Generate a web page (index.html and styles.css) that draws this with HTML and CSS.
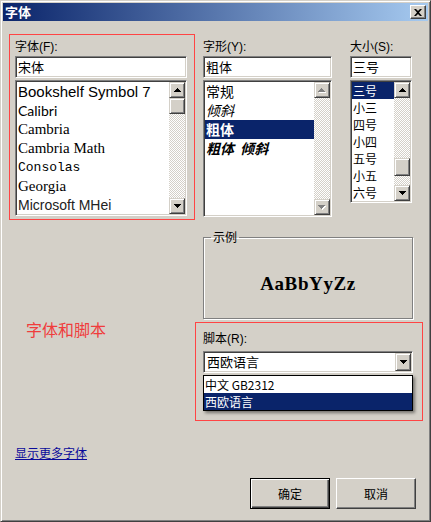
FILE: index.html
```html
<!DOCTYPE html>
<html lang="zh">
<head>
<meta charset="utf-8">
<title>字体</title>
<link rel="stylesheet" href="styles.css">
</head>
<body>
<div class="window">
  <div class="titlebar">
    <span class="title">字体</span>
    <div class="close"><svg width="8" height="7" viewBox="0 0 8 7"><path d="M0 0h2l2 2 2-2h2L5 3.5 8 7H6L4 5 2 7H0l3-3.5z" fill="#000"/></svg></div>
  </div>
  <div class="body">
    <div class="toprow">
      <div class="fontbox">
        <div class="lbl">字体(F):</div>
        <div class="field">宋体</div>
        <div class="list fontlist">
          <div class="items">
            <div class="row f-book">Bookshelf Symbol 7</div>
            <div class="row f-calibri">Calibri</div>
            <div class="row f-cambria">Cambria</div>
            <div class="row f-cambria">Cambria Math</div>
            <div class="row f-consolas">Consolas</div>
            <div class="row f-georgia">Georgia</div>
            <div class="row f-mhei">Microsoft MHei</div>
          </div>
          <div class="vscroll">
            <div class="sbtn"><svg width="7" height="4" viewBox="0 0 7 4"><path d="M3 0h1v1h1v1h1v1h1v1H0V3h1V2h1V1h1z" fill="#000"/></svg></div>
            <div class="track"><div class="thumb"></div></div>
            <div class="sbtn"><svg width="7" height="4" viewBox="0 0 7 4"><path d="M0 0h7v1H6v1H5v1H4v1H3V3H2V2H1V1H0z" fill="#000"/></svg></div>
          </div>
        </div>
      </div>
      <div class="col stylecol">
        <div class="lbl">字形(Y):</div>
        <div class="field">粗体</div>
        <div class="list stylelist">
          <div class="items">
            <div class="row s-row">常规</div>
            <div class="row s-row it">倾斜</div>
            <div class="row s-row bd sel">粗体</div>
            <div class="row s-row bd it">粗体&nbsp;&nbsp;倾斜</div>
          </div>
          <div class="vscroll">
            <div class="sbtn"><svg width="8" height="5" viewBox="0 0 8 5"><path d="M4 1h1v1h1v1h1v1h1v1H1V4h1V3h1V2h1z" fill="#fff"/><path d="M3 0h1v1h1v1h1v1h1v1H0V3h1V2h1V1h1z" fill="#808080"/></svg></div>
            <div class="track"></div>
            <div class="sbtn"><svg width="8" height="5" viewBox="0 0 8 5"><path d="M1 1h7v1H7v1H6v1H5v1H4V4H3V3H2V2H1z" fill="#fff"/><path d="M0 0h7v1H6v1H5v1H4v1H3V3H2V2H1V1H0z" fill="#808080"/></svg></div>
          </div>
        </div>
      </div>
      <div class="col sizecol">
        <div class="lbl">大小(S):</div>
        <div class="field">三号</div>
        <div class="list sizelist">
          <div class="items">
            <div class="row z-row sel">三号</div>
            <div class="row z-row">小三</div>
            <div class="row z-row">四号</div>
            <div class="row z-row">小四</div>
            <div class="row z-row">五号</div>
            <div class="row z-row">小五</div>
            <div class="row z-row">六号</div>
          </div>
          <div class="vscroll">
            <div class="sbtn"><svg width="7" height="4" viewBox="0 0 7 4"><path d="M3 0h1v1h1v1h1v1h1v1H0V3h1V2h1V1h1z" fill="#000"/></svg></div>
            <div class="track sizetrack"><div class="thumb"></div></div>
            <div class="sbtn"><svg width="7" height="4" viewBox="0 0 7 4"><path d="M0 0h7v1H6v1H5v1H4v1H3V3H2V2H1V1H0z" fill="#000"/></svg></div>
          </div>
        </div>
      </div>
    </div>

    <div class="midrow">
      <div class="leftcol">
        <div class="redtext">字体和脚本</div>
      </div>
      <div class="rightcol">
        <fieldset class="sample">
          <legend>示例</legend>
          <div class="sampletext">AaBbYyZz</div>
        </fieldset>
        <div class="scriptbox">
          <div class="lbl">脚本(R):</div>
          <div class="combo">
            <span class="combotext">西欧语言</span>
            <div class="sbtn combobtn"><svg width="7" height="4" viewBox="0 0 7 4"><path d="M0 0h7v1H6v1H5v1H4v1H3V3H2V2H1V1H0z" fill="#000"/></svg></div>
            <div class="dropdown">
              <div class="drow">中文 GB2312</div>
              <div class="drow sel">西欧语言</div>
            </div>
          </div>
        </div>
      </div>
    </div>

    <a class="morelink" href="#">显示更多字体</a>

    <div class="buttons">
      <div class="btn default">确定</div>
      <div class="btn">取消</div>
    </div>
  </div>
</div>
</body>
</html>
```
FILE: styles.css
```css
* { box-sizing: border-box; }
html, body { margin: 0; padding: 0; }
body {
  background: #d4d0c8;
  font-family: "Liberation Sans", "Noto Sans CJK SC", sans-serif;
  font-size: 12px;
  color: #000;
}
.window {
  width: 431px;
  height: 522px;
  border: 1px solid;
  border-color: #d4d0c8 #404040 #404040 #d4d0c8;
  box-shadow: inset 1px 1px 0 #fff, inset -1px -1px 0 #808080;
  padding: 2px;
  background: #d4d0c8;
  display: flex;
  flex-direction: column;
  overflow: hidden;
}
.titlebar {
  height: 18px;
  flex: none;
  background: linear-gradient(to right, #0a246a, #a6caf0);
  display: flex;
  align-items: center;
  justify-content: space-between;
  padding: 0 2px;
}
.title {
  color: #fff;
  font-weight: bold;
  font-size: 13px;
  line-height: 16px;
  font-family: "Noto Sans CJK SC", sans-serif;
}
.close {
  width: 16px;
  height: 14px;
  background: #d4d0c8;
  border: 1px solid;
  border-color: #fff #404040 #404040 #fff;
  box-shadow: inset -1px -1px 0 #808080;
  display: flex;
  align-items: center;
  justify-content: center;
}
.close svg { display: block; }
.body {
  padding: 13px 0 0 6px;
  display: flex;
  flex-direction: column;
}
.lbl {
  height: 14px;
  line-height: 14px;
  font-size: 12px;
  margin-bottom: 2px;
  white-space: nowrap;
}
.field {
  height: 22px;
  background: #fff;
  border: 1px solid;
  border-color: #808080 #fff #fff #808080;
  box-shadow: inset 1px 1px 0 #404040, inset -1px -1px 0 #d4d0c8;
  padding: 0 2px;
  font-size: 13px;
  line-height: 20px;
  font-family: "Noto Sans CJK SC", sans-serif;
}
.list {
  margin-top: 2px;
  background: #fff;
  border: 1px solid;
  border-color: #808080 #fff #fff #808080;
  box-shadow: inset 1px 1px 0 #404040, inset -1px -1px 0 #d4d0c8;
  padding: 1px;
  display: flex;
}
.items {
  flex: 1;
  overflow: hidden;
  min-width: 0;
}
.row {
  white-space: nowrap;
  padding-left: 1px;
  overflow: hidden;
}
.sel { background: #0a246a; color: #fff; }
.vscroll {
  width: 16px;
  flex: none;
  display: flex;
  flex-direction: column;
}
.sbtn {
  width: 16px;
  height: 16px;
  flex: none;
  background: #d4d0c8;
  border: 1px solid;
  border-color: #d4d0c8 #404040 #404040 #d4d0c8;
  box-shadow: inset 1px 1px 0 #fff, inset -1px -1px 0 #808080;
  display: flex;
  align-items: center;
  justify-content: center;
}
.sbtn svg { display: block; }
.track {
  flex: 1;
  background: repeating-conic-gradient(#d4d0c8 0 25%, #fff 0 50%) 0 0 / 2px 2px;
  display: flex;
  flex-direction: column;
}
.thumb {
  width: 16px;
  height: 16px;
  background: #d4d0c8;
  border: 1px solid;
  border-color: #d4d0c8 #404040 #404040 #d4d0c8;
  box-shadow: inset 1px 1px 0 #fff, inset -1px -1px 0 #808080;
}
.sizetrack { padding-top: 60px; }
.sizetrack .thumb { height: 18px; }

.toprow { display: flex; align-items: flex-start; }
.fontbox {
  width: 186px;
  height: 186px;
  border: 1px solid #f44;
  padding: 5px 7px 0 5px;
}
.fontlist { height: 136px; }
.f-book { height: 19px; line-height: 19px; font-family: "Liberation Sans", sans-serif; font-size: 15px; }
.f-calibri { height: 19px; line-height: 19px; font-family: "Lato", sans-serif; font-size: 14px; }
.f-cambria { height: 19px; line-height: 19px; font-family: "Liberation Serif", serif; font-size: 15px; }
.f-consolas { height: 19px; line-height: 19px; font-family: "Liberation Mono", monospace; font-size: 13px; }
.f-georgia { height: 19px; line-height: 19px; font-family: "Liberation Serif", serif; font-size: 15px; }
.f-mhei { height: 19px; line-height: 19px; font-family: "Liberation Sans", sans-serif; font-size: 14px; color: #222; }

.col { padding-top: 6px; }
.stylecol { margin-left: 8px; width: 129px; }
.sizecol { margin-left: 18px; width: 62px; }
.stylelist { height: 137px; }
.sizelist { height: 123px; }
.s-row {
  height: 19px;
  line-height: 19px;
  font-size: 14px;
  font-family: "Noto Sans CJK SC", sans-serif;
}
.it { font-style: italic; }
.bd { font-weight: bold; }
.z-row {
  height: 17px;
  line-height: 17px;
  font-size: 12px;
  font-family: "Noto Sans CJK SC", sans-serif;
}

.midrow { display: flex; margin-top: 10px; }
.leftcol { width: 186px; flex: none; }
.redtext {
  margin: 89px 0 0 17px;
  font-size: 16px;
  line-height: 20px;
  color: #f03c3c;
  font-family: "Noto Sans CJK SC", sans-serif;
}
.rightcol { width: 228px; flex: none; display: flex; flex-direction: column; }
.sample {
  margin: 0 0 0 8px;
  width: 210px;
  height: 89px;
  padding: 0;
  border: 1px solid #808080;
  box-shadow: 1px 1px 0 #fff, inset 1px 1px 0 #fff;
}
.sample legend {
  margin-left: 7px;
  padding: 0 2px;
  font-size: 12px;
  line-height: 14px;
  font-family: "Noto Sans CJK SC", sans-serif;
}
.sampletext {
  margin-top: 29px;
  text-align: center;
  font-family: "Liberation Serif", serif;
  font-weight: bold;
  font-size: 19px;
  line-height: 22px;
  letter-spacing: 0.6px;
}
.scriptbox {
  margin-top: 3px;
  width: 228px;
  height: 99px;
  border: 1px solid #f44;
  padding: 9px 0 0 7px;
}
.scriptbox .lbl { margin-bottom: 5px; }
.combo {
  position: relative;
  width: 210px;
  height: 22px;
  background: #fff;
  border: 1px solid;
  border-color: #808080 #fff #fff #808080;
  box-shadow: inset 1px 1px 0 #404040, inset -1px -1px 0 #d4d0c8;
  padding: 1px;
  display: flex;
  align-items: stretch;
}
.combotext {
  flex: 1;
  padding-left: 2px;
  font-size: 13px;
  line-height: 18px;
  font-family: "Noto Sans CJK SC", sans-serif;
}
.combobtn { height: 18px; }
.dropdown {
  position: absolute;
  left: -1px;
  top: 23px;
  width: 210px;
  height: 36px;
  background: #fff;
  border: 1px solid #000;
  box-shadow: 2px 2px 3px rgba(0, 0, 0, 0.45);
}
.drow {
  height: 17px;
  line-height: 17px;
  padding-left: 1px;
  font-size: 12px;
  font-family: "Noto Sans CJK SC", sans-serif;
}

.morelink {
  margin: 25px 0 0 6px;
  align-self: flex-start;
  font-size: 12px;
  line-height: 14px;
  color: #0a0a9a;
  text-decoration: underline;
  font-family: "Noto Sans CJK SC", sans-serif;
}
.buttons {
  display: flex;
  justify-content: flex-end;
  gap: 6px;
  margin-top: 18px;
  padding-right: 12px;
}
.btn {
  width: 80px;
  height: 31px;
  background: #d4d0c8;
  border: 1px solid;
  border-color: #fff #404040 #404040 #fff;
  box-shadow: inset -1px -1px 0 #808080;
  display: flex;
  align-items: center;
  justify-content: center;
  font-size: 12px;
  font-family: "Noto Sans CJK SC", sans-serif;
}
.btn.default {
  border: 1px solid #000;
  box-shadow: inset 1px 1px 0 #fff, inset -1px -1px 0 #404040, inset -2px -2px 0 #808080;
}
```
